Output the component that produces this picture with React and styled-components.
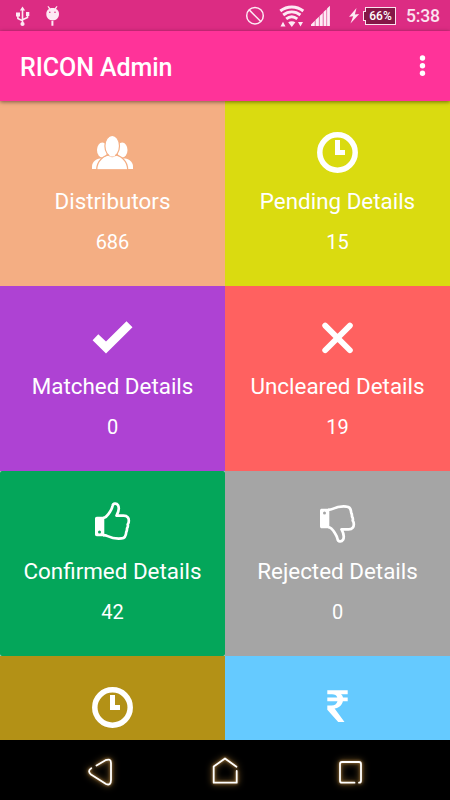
import React from "react";
import styled, { createGlobalStyle } from "styled-components";

const GlobalStyle = createGlobalStyle`
  * { box-sizing: border-box; }
  body { margin: 0; background: #000; }
`;

const Screen = styled.div`
  width: 450px;
  height: 800px;
  display: flex;
  flex-direction: column;
  overflow: hidden;
  background: #000;
  color: #fff;
  font-family: Roboto, "Liberation Sans", sans-serif;
  svg { display: block; flex: none; }
`;

const StatusBar = styled.header`
  height: 31px;
  flex: none;
  display: flex;
  justify-content: space-between;
  background: #dc2c83;
`;

const StatusGroup = styled.div`
  display: flex;
  align-items: flex-start;
  padding: ${(p) => p.$pad};
`;

const StatusIcon = styled.svg`
  width: ${(p) => p.$w}px;
  height: 31px;
  margin-right: ${(p) => p.$gap || 0}px;
  fill: #fdeaf4;
`;

const Battery = styled.div`
  position: relative;
  width: 31px;
  height: 18px;
  margin: 7px 10px 0 0;
  border: 1px solid #fbe3ef;
  background: #861747;
  font-size: 12px;
  font-weight: 500;
  line-height: 17px;
  text-align: center;
`;

const BatteryTip = styled.span`
  position: absolute;
  left: -3px;
  top: 3px;
  width: 3px;
  height: 10px;
  border: 1px solid #fbe3ef;
  border-right: 0;
  background: #861747;
`;

const Time = styled.span`
  width: 34px;
  margin-top: 5px;
  font-size: 17.6px;
  line-height: 22px;
  font-weight: 500;
  letter-spacing: -0.2px;
  color: #fbe3ef;
  white-space: nowrap;
`;

const AppBar = styled.div`
  position: relative;
  z-index: 1;
  height: 70px;
  flex: none;
  display: flex;
  align-items: center;
  justify-content: space-between;
  padding: 3px 23px 0 20px;
  background: #ff3399;
  box-shadow: 0 1px 4px rgba(0, 0, 0, 0.5);
`;

const Title = styled.h1`
  margin: 0;
  font-size: 25px;
  line-height: 30px;
  font-weight: 500;
  letter-spacing: -0.05px;
`;

const MenuButton = styled.button`
  display: flex;
  margin-top: -3px;
  padding: 0;
  border: 0;
  background: none;
`;

const Grid = styled.main`
  height: 639px;
  flex: none;
  display: grid;
  grid-template-columns: 225px 225px;
  grid-auto-rows: 185px;
  overflow: hidden;
`;

const TileBack = styled.div`
  background: #d5d5d5;
`;

const Tile = styled.section`
  height: 100%;
  display: flex;
  flex-direction: column;
  align-items: center;
  padding-top: 31px;
  background: ${(p) => p.$color};
  border-radius: ${(p) => (p.$rounded ? "2px" : "0")};
`;

const TileIcon = styled.svg`
  width: 41px;
  height: 41px;
  fill: #fff;
`;

const Label = styled.div`
  margin-top: 14px;
  font-size: 22.4px;
  line-height: 28px;
  white-space: nowrap;
`;

const Count = styled.div`
  margin-top: 15px;
  font-size: 20px;
  line-height: 24px;
`;

const NavBar = styled.nav`
  height: 60px;
  flex: none;
  display: flex;
  justify-content: space-between;
  padding: 0 70px;
  background: #000;
`;

const NavIcon = styled.svg`
  width: 60px;
  height: 60px;
  fill: none;
  stroke: #fff;
  stroke-width: 1.8;
  stroke-linecap: round;
  stroke-linejoin: round;
  filter: drop-shadow(0 0 1.5px #b98a45) drop-shadow(0 0 3px #8a642c);
`;

const People = () => (
  <TileIcon viewBox="0 0 41 41">
    <ellipse cx="10.3" cy="18" rx="5.3" ry="7.5" />
    <ellipse cx="30.2" cy="18" rx="5.3" ry="7.5" />
    <path d="M0 37v-2.5C0 30 4 26.700 8 26.500h25c4 .2 8 3.500 8 8V37z" />
    <g stroke="#f4ae83" strokeWidth="1.2">
      <path d="M4.700 38c0-9 6.800-15.300 15.500-15.300S35.700 29 35.700 38z" />
      <ellipse cx="20.200" cy="14" rx="7.300" ry="10.600" />
    </g>
    <path d="M17.500 22h5.400v2.500h-5.400z" />
    <path d="M0 37.300h41V41H0z" fill="#f4ae83" />
  </TileIcon>
);

const Clock = () => (
  <TileIcon viewBox="0 0 41 41">
    <circle cx="20.500" cy="20.500" r="17.700" fill="none" stroke="#fff" strokeWidth="5.500" />
    <path d="M18 8h5v10h5v5H18z" />
  </TileIcon>
);

const Check = () => (
  <TileIcon viewBox="0 0 41 41">
    <path d="M.6 23.300 6.300 17.300 14 24.500 34.500 4.300 40.500 10.300 14 36.500z" />
  </TileIcon>
);

const Cross = () => (
  <TileIcon viewBox="0 0 41 41">
    <path d="M8.200 8.600 32.900 33.200M32.900 8.600 8.200 33.200" stroke="#fff" strokeWidth="5.800" strokeLinecap="round" />
  </TileIcon>
);

const Thumb = ({ down }) => (
  <TileIcon viewBox="0 0 41 41">
    <g transform={down ? "translate(0 41) scale(1 -1)" : undefined}>
      <path
        fillRule="evenodd"
        d="M4.800 14.800h7.500v19.500H4.800c-1 0-1.800-.8-1.800-1.700V16.600c0-1 .8-1.800 1.800-1.800zM7.500 28.600a1.500 1.500 0 1 0 0 3 1.500 1.500 0 0 0 0-3z"
      />
      <path
        d="M11 16c3-.2 5.200-3.200 7-6.200 1.600-2.500 2.200-4 2.600-6C21 1.200 24.500.8 26 3.200c1.500 3 .4 7.200-1.500 10.500h7c4 0 5.800 2.600 5.200 6 .2.800-.6 2-1 2.700.4 1.500.2 2.900-.7 4 .1 1.500-.1 2.600-.8 3.800-.2 4-1.200 6-4.600 6.200-6 .6-10-.4-14-2.300-1.500-.7-2.600-.8-4.600-.9"
        fill="none"
        stroke="#fff"
        strokeWidth="2.700"
        strokeLinejoin="round"
      />
    </g>
  </TileIcon>
);

const Rupee = () => (
  <TileIcon viewBox="0 0 41 41">
    <path d="M10.300 3.300h20.400v4H24c1.200 1 1.800 2.100 2 3.300h4.700v3.700h-4.800c-1 4.200-4 6.700-8.300 7.200L27.500 35h-6.300L10.300 22.700v-4.100h4.200c3.200 0 5.300-1.500 6-4.300H10.300v-3.700h10c-.7-2.200-2.400-3.300-5.300-3.300h-4.700z" />
  </TileIcon>
);

const tiles = [
  { label: "Distributors", count: "686", color: "#f4ae83", icon: <People /> },
  { label: "Pending Details", count: "15", color: "#dadb10", icon: <Clock /> },
  { label: "Matched Details", count: "0", color: "#ae42d3", icon: <Check /> },
  { label: "Uncleared Details", count: "19", color: "#ff6160", icon: <Cross /> },
  { label: "Confirmed Details", count: "42", color: "#04a65a", icon: <Thumb />, rounded: true },
  { label: "Rejected Details", count: "0", color: "#a5a5a5", icon: <Thumb down /> },
  { color: "#b39116", icon: <Clock /> },
  { color: "#65caff", icon: <Rupee /> },
];

export default function App() {
  return (
    <Screen>
      <GlobalStyle />
      <StatusBar>
        <StatusGroup $pad="0 0 0 15px">
          <StatusIcon $w={15} $gap={15} viewBox="15 0 15 31">
            <path d="M22.500 6.500l2.600 4h-5.200zM16 12.500h4v4h-4zM26 12h3.300v4H26z" />
            <circle cx="22.500" cy="24" r="2.100" />
            <path d="M22.500 9v14M17.900 16v2.500l4.600 2.200M27.500 15v2.500l-5 2.200" fill="none" stroke="#fdeaf4" strokeWidth="1.600" />
          </StatusIcon>
          <StatusIcon $w={16} viewBox="45 0 16 31">
            <path
              fillRule="evenodd"
              d="M46.300 14c0-2.500 1-4 2.700-5l-1.500-2.500.8-.4 2 2.200c1.400-.4 3-.4 4.400 0l2-2.200.8.4L56 9c2 1 3 2.500 3 5 0 4-2.800 6.400-6.300 6.400S46.300 18 46.300 14zM49.800 11.500a.8.8 0 1 0 0 1.600.8.8 0 0 0 0-1.600zM55 11.500a.8.8 0 1 0 0 1.600.8.8 0 0 0 0-1.600zM51.400 21h2v4.800h-2z"
            />
          </StatusIcon>
        </StatusGroup>
        <StatusGroup $pad="0 10px 0 0">
          <StatusIcon $w={20} $gap={14} viewBox="245 0 20 31">
            <g fill="none" stroke="#fdeaf4" strokeWidth="1.500">
              <circle cx="255" cy="15.700" r="8.300" />
              <path d="m249.200 9.900 11.600 11.600" />
            </g>
          </StatusIcon>
          <StatusIcon $w={26} $gap={5} viewBox="279 0 26 31">
            <g fill="none" stroke="#fdeaf4" strokeWidth="2.900">
              <path d="M280.300 11c6.900-5.400 16.100-5.400 23 0" />
              <path d="M283.200 15c5.200-4.100 12-4.100 17.200 0" />
              <path d="M286.200 18.900c3.400-2.700 7.700-2.700 11.100 0" />
            </g>
            <path d="M288.200 22.300c2.200-1.500 5-1.500 7.200 0l-3.600 4.700zM280.500 26.500l2.500-4.700 2.500 4.700zM298 22h5l-2.500 4.600z" />
          </StatusIcon>
          <StatusIcon $w={20} $gap={19} viewBox="310 0 20 31">
            <path d="M311 26v-1.500l3.800-3.700V26zM315.500 26v-5.900l3.400-3.300V26zM319.600 26V16l3.200-3.100V26zM323.500 26V12.100l3-2.900V26zM327.100 26V8.500l2.800-2.800V26z" />
          </StatusIcon>
          <StatusIcon $w={11} $gap={5} viewBox="349 0 11 31">
            <path d="m356.500 8-7.500 8.800 4.200-.6L350.500 23.500l8.700-9.600-4.300.7z" />
          </StatusIcon>
          <Battery><BatteryTip />66%</Battery>
          <Time>5:38</Time>
        </StatusGroup>
      </StatusBar>
      <AppBar>
        <Title>RICON Admin</Title>
        <MenuButton aria-label="More options">
          <svg width="8" height="22" viewBox="0 0 8 22" fill="#fff">
            <circle cx="3.500" cy="3" r="2.700" />
            <circle cx="3.500" cy="10.700" r="2.700" />
            <circle cx="3.500" cy="18.300" r="2.700" />
          </svg>
        </MenuButton>
      </AppBar>
      <Grid>
        {tiles.map((tile, i) => (
          <TileBack key={i}>
            <Tile $color={tile.color} $rounded={tile.rounded}>
              {tile.icon}
              {tile.label && <Label>{tile.label}</Label>}
              {tile.count && <Count>{tile.count}</Count>}
            </Tile>
          </TileBack>
        ))}
      </Grid>
      <NavBar>
        <NavIcon viewBox="70 740 60 60">
          <path d="M96.500 765.500 105.500 760.200Q111 758 111 763V780Q111 786 106 784L91 774.500Q87 771 91.300 768.300" />
        </NavIcon>
        <NavIcon viewBox="195 740 60 60">
          <path d="M236.500 766.700 225 758.500 213.700 766.500V782.700H236.700V771" />
        </NavIcon>
        <NavIcon viewBox="320 740 60 60">
          <path d="M354.500 782.700H342Q340 782.700 340 780.700V764Q340 762 342 762H359Q361 762 361 764V780.700Q361 782.700 359 782.700" />
        </NavIcon>
      </NavBar>
    </Screen>
  );
}
